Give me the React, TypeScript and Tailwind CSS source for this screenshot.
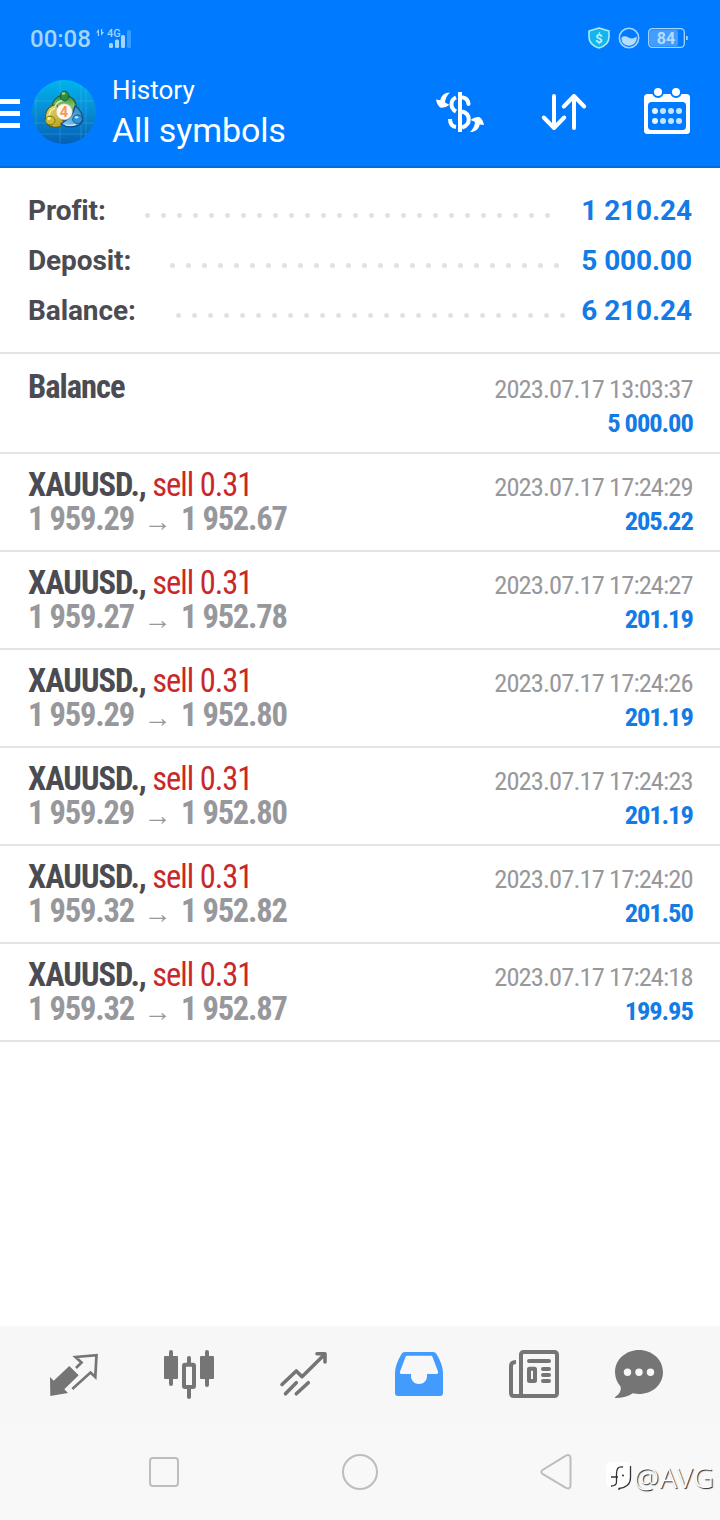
import type { ReactNode } from 'react';

const SUMMARY = [
  { label: 'Profit:', value: '1 210.24', dots: 26, width: 'w-[117px]' },
  { label: 'Deposit:', value: '5 000.00', dots: 25, width: 'w-[142px]' },
  { label: 'Balance:', value: '6 210.24', dots: 25, width: 'w-[148px]' },
];

const DEALS = [
  { open: '1 959.29', close: '1 952.67', time: '2023.07.17 17:24:29', profit: '205.22' },
  { open: '1 959.27', close: '1 952.78', time: '2023.07.17 17:24:27', profit: '201.19' },
  { open: '1 959.29', close: '1 952.80', time: '2023.07.17 17:24:26', profit: '201.19' },
  { open: '1 959.29', close: '1 952.80', time: '2023.07.17 17:24:23', profit: '201.19' },
  { open: '1 959.32', close: '1 952.82', time: '2023.07.17 17:24:20', profit: '201.50' },
  { open: '1 959.32', close: '1 952.87', time: '2023.07.17 17:24:18', profit: '199.95' },
];

function StatusBar() {
  return (
    <div className="flex h-[76px] items-center pl-[30px] pr-[32px] text-[#a3d6ff]">
      <span className="w-[66px] pt-[2px] text-[24px] leading-[28px] font-medium">00:08</span>
      <svg width="36" height="24" viewBox="0 0 36 24" fill="currentColor" className="mt-[2px]">
        <path d="M0 5.500L3 2V9H1.800V5.500ZM8 5L5 9V2H6.200V5Z" />
        <text x="11" y="9.500" fontSize="11" fontWeight="500" fontFamily="Roboto, sans-serif">4G</text>
        <rect x="13" y="16" width="4" height="5" rx="1.500" />
        <rect x="19" y="12.500" width="4" height="8.500" rx="1.500" />
        <rect x="25" y="8" width="4" height="13" rx="1.500" />
        <rect x="31" y="3" width="4" height="18" rx="1.500" opacity=".35" />
      </svg>
      <div className="ml-auto flex items-center">
        <svg width="22" height="22" viewBox="0 0 22 22" className="mr-[8px]">
          <path d="M11 1L21 4V10C21 16 16 19.500 11 21C6 19.500 1 16 1 10V4Z" fill="#16b4ee" stroke="#a9eaf5" strokeWidth="1.600" strokeLinejoin="round" />
          <text x="11" y="15.500" textAnchor="middle" fontSize="13" fontWeight="700" fontFamily="Roboto, sans-serif" fill="#b8f2ff">$</text>
        </svg>
        <svg width="22" height="22" viewBox="0 0 22 22" className="mr-[8px]">
          <circle cx="11" cy="11" r="9.700" fill="none" stroke="#a3d6ff" strokeWidth="1.600" />
          <path d="M3.500 10.500C6 8.500 8 9 10.500 10.500C13.500 12.200 16 11.500 18.500 9.500C19.500 15 15.500 18.700 11 18.700C6.500 18.700 3 15.500 3.500 10.500Z" fill="#b3dcff" />
        </svg>
        <svg width="40" height="22" viewBox="0 0 40 22">
          <rect x=".7" y="1.700" width="35.600" height="18.600" rx="3.500" fill="none" stroke="#a3d6ff" strokeWidth="1.300" />
          <rect x="2" y="3" width="28" height="16" rx="2" fill="#459cff" />
          <rect x="38" y="9" width="1.700" height="4" fill="#a3d6ff" />
          <text x="18" y="16.700" textAnchor="middle" fontSize="16" fontWeight="700" fontFamily="Roboto, sans-serif" fill="#b3dcff">84</text>
        </svg>
      </div>
    </div>
  );
}

function Logo() {
  return (
    <svg width="64" height="64" viewBox="0 0 64 64">
      <defs>
        <linearGradient id="sky" x1="0" y1="0" x2="0" y2="1">
          <stop offset="0" stopColor="#00b4ee" />
          <stop offset=".5" stopColor="#078bd4" />
          <stop offset="1" stopColor="#0560b4" />
        </linearGradient>
        <linearGradient id="green" x1="0" y1="0" x2="0" y2="1">
          <stop offset="0" stopColor="#2f8f3c" />
          <stop offset=".6" stopColor="#86c765" />
          <stop offset="1" stopColor="#2f8f3c" />
        </linearGradient>
        <linearGradient id="yellow" x1="0" y1="0" x2="1" y2="1">
          <stop offset="0" stopColor="#e9e07a" />
          <stop offset="1" stopColor="#b39a14" />
        </linearGradient>
        <linearGradient id="blue" x1="1" y1="0" x2="0" y2="1">
          <stop offset="0" stopColor="#2583c4" />
          <stop offset="1" stopColor="#8fd2f4" />
        </linearGradient>
        <clipPath id="round"><circle cx="32" cy="32" r="32" /></clipPath>
      </defs>
      <g clipPath="url(#round)">
        <rect width="64" height="64" fill="url(#sky)" />
        <path d="M4 0V64M28 0V64M49 0V64M54 0V64M0 21H64M0 43H64M0 54H64" stroke="#6fc8f5" strokeOpacity=".25" strokeWidth="1" />
      </g>
      {/* three overlapping figures round the badge */}
      <path d="M20.500 30C19 22 24 15.500 32 15.500C40 15.500 45.500 22 44 30C42 34 24 35 20.500 30Z" fill="url(#green)" stroke="#1d5c3c" strokeWidth="1.200" />
      <path d="M24 24.500C28 27 24 36 32 41C33 46 26 48 21 47C15 46 12.500 41 13.500 35C14.500 29 18 25.500 24 24.500Z" fill="url(#yellow)" stroke="#55601f" strokeWidth="1.200" />
      <path d="M43 26C48 28.500 51.500 35 50.500 41C48 47.500 36 48.500 29 44C33 40 40 40 43 26Z" fill="url(#blue)" stroke="#134a80" strokeWidth="1.200" />
      <path d="M23 27C24 23 27 20.500 32 20.500" fill="none" stroke="#d3eebc" strokeWidth="1.300" />
      <path d="M17 35C18 31 20 29 23 28" fill="none" stroke="#fbf6bd" strokeWidth="1.300" />
      <path d="M33 44.500C37 46 41 45.500 44 44" fill="none" stroke="#d0effc" strokeWidth="1.300" />
      <ellipse cx="32.500" cy="16" rx="4.300" ry="4.800" fill="#2c8f3e" stroke="#14553a" strokeWidth=".9" />
      <ellipse cx="18.300" cy="40.500" rx="4.800" ry="4.300" fill="#d0bb30" stroke="#776b12" strokeWidth=".9" />
      <ellipse cx="45.500" cy="39.300" rx="4.800" ry="4.300" fill="#2f93d8" stroke="#125289" strokeWidth=".9" />
      <ellipse cx="31.500" cy="13.500" rx="1.800" ry="1.300" fill="#9fdc86" />
      <ellipse cx="17" cy="38.500" rx="1.800" ry="1.300" fill="#fff7a8" />
      <ellipse cx="44.500" cy="37.300" rx="1.800" ry="1.300" fill="#b9e4fb" />
      <circle cx="32.300" cy="31.800" r="8" fill="#fdf7f0" stroke="#c9c3b4" strokeWidth=".6" />
      <text x="32" y="37" textAnchor="middle" fontSize="14.500" fontWeight="700" fontFamily="Roboto, sans-serif" fill="#f29a58">4</text>
    </svg>
  );
}

function SymbolIcon() {
  const arrow = 'M14 4.500C8.500 4.500 5 8 4.300 12.200L0 11.500C.5 15 2 18 4.700 19.700C8 19.800 11.300 18.700 13.300 16.700L9 14.500C9 11 11 7.500 14 4.500Z';
  return (
    <svg width="48" height="48" viewBox="0 0 48 48" fill="none" stroke="#fff" strokeWidth="4">
      <path d="M24 4V44" />
      <path d="M20 9.500C14 12 14 20 20 23.500" />
      <path d="M27 9.500C30 10 32 12 32.500 16" strokeLinecap="round" />
      <path d="M26 23.500C34.500 25.500 35.500 36.500 26 39.500" />
      <path d="M14 31C14 36 16 38.500 20 39" />
      <path d={arrow} fill="#fff" stroke="none" />
      <path d={arrow} fill="#fff" stroke="none" transform="rotate(180 24 24.300)" />
    </svg>
  );
}

function SortIcon() {
  return (
    <svg width="48" height="48" viewBox="0 0 48 48" fill="none" stroke="#fff" strokeWidth="4" strokeLinecap="round" strokeLinejoin="round">
      <path d="M14 8V40M3.800 29.500L14 40L24.200 29.500" />
      <path d="M34 40V8M23.800 18.500L34 8L44.200 18.500" />
    </svg>
  );
}

function CalendarIcon() {
  return (
    <svg width="48" height="48" viewBox="0 0 48 48">
      <rect x="1" y="6" width="46" height="40" rx="3.500" fill="#fff" />
      <rect x="5" y="14" width="38" height="28" rx="3.500" fill="#007aff" />
      {[15, 33].map(x => (
        <circle key={x} cx={x} cy="4" r="5" fill="#fff" stroke="#007aff" strokeWidth="2" />
      ))}
      {[12, 20, 28, 36].map(x => (
        <g key={x} fill={x === 12 ? '#e4f3ff' : '#c2e4ff'}>
          <circle cx={x} cy="23" r="3" />
          <circle cx={x} cy="33" r="3" />
        </g>
      ))}
    </svg>
  );
}

function Header() {
  return (
    <header className="h-[168px] border-b-2 border-[#046bdc] bg-[#007aff] text-white">
      <StatusBar />
      <div className="flex h-[72px] items-center pr-[29px]">
        <div className="mt-[3px] flex w-[20px] flex-col gap-[7px]">
          <span className="h-[5px] bg-white" />
          <span className="h-[5px] bg-white" />
          <span className="h-[5px] bg-white" />
        </div>
        <div className="ml-[12px]"><Logo /></div>
        <div className="ml-[16px]">
          <div className="text-[26px] leading-[36px]">History</div>
          <div className="pt-px text-[34px] leading-[43px] tracking-[-0.1px]">All symbols</div>
        </div>
        <div className="ml-auto flex items-center">
          <SymbolIcon />
          <div className="mr-[55px] ml-[56px]"><SortIcon /></div>
          <CalendarIcon />
        </div>
      </div>
    </header>
  );
}

function Row({ left, time, value, first }: { left: ReactNode; time: string; value: string; first?: boolean }) {
  return (
    <div className={`flex items-baseline justify-between border-b-2 border-[#e4e4e6] px-[28px] font-['Roboto_Condensed',Roboto,sans-serif] font-stretch-75% ${first ? 'h-[100px] pt-[16px]' : 'h-[98px] pt-[14px]'}`}>
      <div className="text-[32.5px] leading-[34px] font-bold tracking-[-1px] text-[#4b4b52]">{left}</div>
      <div className="-mr-[0.7px] text-right text-[26.5px] leading-[34px] tracking-[-0.9px]">
        <div className="text-[#97989c]">{time}</div>
        <div className="font-bold tracking-[-1.1px] text-[#127be6]">{value}</div>
      </div>
    </div>
  );
}

function TabIcon({ children, active }: { children: ReactNode; active?: boolean }) {
  return (
    <svg width="56" height="56" viewBox="0 0 56 56" className={active ? 'text-[#429bfd]' : 'text-[#757575]'} fill="currentColor">
      {children}
    </svg>
  );
}

function TabBar() {
  return (
    <nav className="flex h-[98px] bg-[#f7f7f7] pt-[20px] pl-[46px]">
      <div className="flex gap-[59px]">
        <TabIcon>
          <path d="M4 31L7.700 34.700L23.300 20L32.700 29.300L18.300 43.300L22 47L4.300 50Z" />
          <path d="M30 22L35.500 16.500L29.500 11L50.500 9.200L49.300 31L44.500 26.500L26.300 43" fill="none" stroke="currentColor" strokeWidth="2.700" />
        </TabIcon>
        <TabIcon>
          <rect x="3" y="10" width="14" height="23" rx="1" />
          <rect x="8" y="4" width="4" height="36" rx="2" />
          <rect x="26" y="10" width="4" height="9" rx="2" />
          <rect x="26" y="41" width="4" height="12" rx="2" />
          <rect x="23" y="18.700" width="10" height="22.300" rx="1" fill="none" stroke="currentColor" strokeWidth="4" />
          <rect x="39" y="10" width="14" height="23" rx="1" />
          <rect x="44" y="4" width="4" height="37" rx="2" />
        </TabIcon>
        <TabIcon>
          <g fill="none" stroke="currentColor" strokeWidth="3.600" strokeLinecap="round" strokeLinejoin="round">
            <path d="M6 38.500L20.300 25L26 30.700L48.500 8.500M41 7.800H49V16" />
            <path d="M9.500 47.800L20.300 36.700M20.300 47.800L32.300 36.700" />
          </g>
        </TabIcon>
        <TabIcon active>
          <path fillRule="evenodd" d="M14 6H42C44 6 45 7 45.800 8.500C49.500 15 52 21 52 27V47C52 49 51 50 49 50H7C5 50 4 49 4 47V27C4 21 6.500 15 10.200 8.500C11 7 12 6 14 6ZM16.500 9.700C15.500 9.700 14.800 10.200 14.500 11L9 25.500C8.500 27 9 28 10.500 28H20V30C20 34.500 23.500 38 28 38C32.500 38 36 34.500 36 30V28H45.500C47 28 47.500 27 47 25.500L41.500 11C41.200 10.200 40.500 9.700 39.500 9.700Z" />
        </TabIcon>
        <TabIcon>
          <g fill="none" stroke="currentColor" strokeWidth="4">
            <rect x="15" y="6" width="36" height="44" rx="2.500" />
            <path d="M10 16C7 16 5 17 5 20V47C5 49 6 50 8 50H17" />
            <rect x="23" y="22.700" width="6" height="12.300" rx=".5" />
            <path d="M23 15H43M37 23H43M37 29H43M37 35H43" strokeLinecap="round" />
          </g>
        </TabIcon>
      </div>
      <div className="ml-[49px]">
        <TabIcon>
          <path d="M28 4C41 4 52 13.500 52 26C52 39 41 48 28 48C26 48 24 47.800 22 47.200C16.500 50.500 10.500 52 4.500 52C3.700 52 3.700 51.300 4.200 51C8.500 48 10.500 44.500 9.500 40.500C6 36.500 4 31.500 4 26C4 13.500 15 4 28 4Z" />
          <g fill="#f7f7f7">
            <circle cx="16.500" cy="26.300" r="3.700" />
            <circle cx="28" cy="26.300" r="3.700" />
            <circle cx="39.500" cy="26.300" r="3.700" />
          </g>
        </TabIcon>
      </div>
    </nav>
  );
}

function SystemNav() {
  return (
    <div className="flex h-[96px] items-center bg-[#f8f8f8] pl-[146px]">
      <svg width="36" height="36" viewBox="0 0 36 36" fill="none" stroke="#bdbdbd" strokeWidth="2">
        <rect x="4" y="4" width="28" height="28" rx="3" />
      </svg>
      <svg width="36" height="36" viewBox="0 0 36 36" className="ml-[160px]" fill="none" stroke="#bdbdbd" strokeWidth="2">
        <circle cx="18" cy="18" r="17" />
      </svg>
      <svg width="36" height="36" viewBox="0 0 36 36" className="ml-[160px]" fill="none" stroke="#bdbdbd" strokeWidth="2">
        <path d="M4.500 16L27.500 1.800C30 .5 32.500 1 32.500 4V31.500C32.500 34.500 30 35 27.500 33.700L4.500 19.800C3 18.800 3 17 4.500 16Z" />
      </svg>
      <div className="mt-[9px] ml-[32px] flex items-center">
        <svg width="28" height="32" viewBox="0 0 28 32">
          <path d="M6 1H19C23 1 25 3 25 7V18C25 24 21 27 14 28L12 26H6C2 26 0 24 0 20V8C0 3 2 1 6 1Z" fill="#fff" />
          <path d="M5 16H12M17 6C12 5 10.500 8 10.500 13V21C10.500 24 8 25 5 25M24.500 5V17C24.500 23 20 27 13 27.500V29" fill="none" stroke="#333" strokeWidth="1.300" />
          <circle cx="17" cy="14.500" r="1.100" fill="#444" />
        </svg>
        <span className="font-['Noto_Sans',sans-serif] text-[28px] leading-[32px] font-light tracking-[0.9px] text-white [text-shadow:1px_1px_1px_#222]">@AVG</span>
      </div>
    </div>
  );
}

export default function App() {
  return (
    <div className="flex h-[1520px] w-[720px] flex-col overflow-hidden bg-white font-['Roboto',sans-serif]">
      <Header />

      {/* Totals */}
      <section className="h-[186px] border-b-2 border-[#e4e4e6] px-[28px] pt-[18px] text-[28px] leading-[50px] font-bold tracking-[-0.1px]">
        {SUMMARY.map(s => (
          <div key={s.label} className="flex h-[50px] items-center">
            <span className={`shrink-0 text-[#4b4b52] ${s.width}`}>{s.label}</span>
            <div className="mt-[9px] flex gap-[11px]">
              {Array.from({ length: s.dots }, (_, i) => (
                <span key={i} className="size-[5px] rounded-full bg-[#e2e2e2]" />
              ))}
            </div>
            <span className="ml-auto text-[#127be6]">{s.value}</span>
          </div>
        ))}
      </section>

      {/* Deals */}
      <main className="flex-1">
        <Row first left="Balance" time="2023.07.17 13:03:37" value="5 000.00" />
        {DEALS.map(d => (
          <Row
            key={d.time}
            time={d.time}
            value={d.profit}
            left={
              <>
                <div>XAUUSD., <span className="font-normal text-[#c9282b]">sell 0.31</span></div>
                <div className="flex tracking-[-1.2px] text-[#97989c]">
                  <span>{d.open}</span>
                  <span className="w-[47px] pt-[3px] text-center font-['Liberation_Sans',sans-serif] text-[28px] font-normal tracking-normal">→</span>
                  <span>{d.close}</span>
                </div>
              </>
            }
          />
        ))}
      </main>

      <TabBar />
      <SystemNav />
    </div>
  );
}
